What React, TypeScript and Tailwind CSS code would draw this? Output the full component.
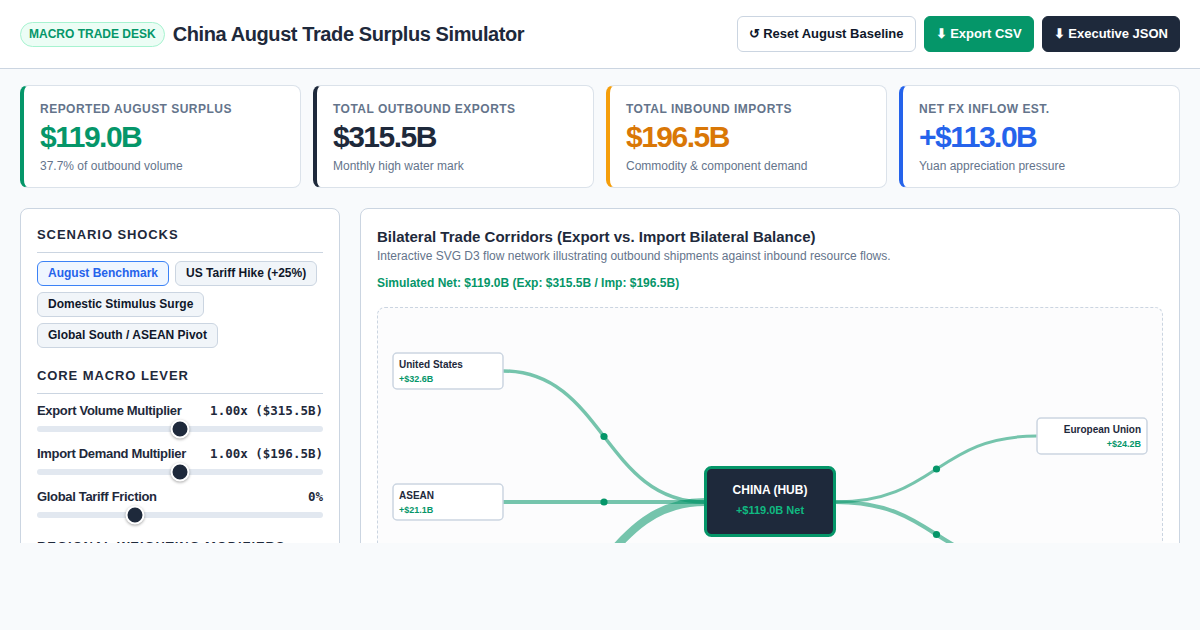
import React from "react"

const stats = [
    { label: "Reported August Surplus", value: "$119.0B", note: "37.7% of outbound volume", edge: "border-l-[#059669]", tone: "text-[#059669]" },
    { label: "Total Outbound Exports", value: "$315.5B", note: "Monthly high water mark", edge: "border-l-[#1e293b]", tone: "text-[#1e293b]" },
    { label: "Total Inbound Imports", value: "$196.5B", note: "Commodity & component demand", edge: "border-l-[#f59e0b]", tone: "text-[#d97706]" },
    { label: "Net FX Inflow Est.", value: "+$113.0B", note: "Yuan appreciation pressure", edge: "border-l-[#2563eb]", tone: "text-[#2563eb]" },
]

const scenarios = ["August Benchmark", "US Tariff Hike (+25%)", "Domestic Stimulus Surge", "Global South / ASEAN Pivot"]

const levers = [
    { name: "Export Volume Multiplier", readout: "1.00x ($315.5B)", pos: 50 },
    { name: "Import Demand Multiplier", readout: "1.00x ($196.5B)", pos: 50 },
    { name: "Global Tariff Friction", readout: "0%", pos: 34.3 },
]

// corridor curves, drawn like a d3 horizontal link
const link = (x0: number, y0: number, x1: number, y1: number) => {
    const mx = (x0 + x1) / 2
    return `M${x0},${y0} C${mx},${y0} ${mx},${y1} ${x1},${y1}`
}

const corridors = [
    { x0: 125, y0: 63, x1: 327, y1: 194, w: 3.5 },
    { x0: 125, y0: 194, x1: 327, y1: 194, w: 4 },
    { x0: 125, y0: 312, x1: 327, y1: 194, w: 8 },
    { x0: 458, y0: 194, x1: 659, y1: 128, w: 3 },
    { x0: 458, y0: 194, x1: 659, y1: 259, w: 4 },
]

function SectionTitle({ children }: { children: React.ReactNode }) {
    return (
        <h3 className="text-[13px] leading-[18px] font-bold uppercase tracking-[0.07em] text-[#1e293b] pb-2 border-b border-[#cbd5e1]">
            {children}
        </h3>
    )
}

function TradeGraph() {
    return (
        <svg width="100%" height="400" className="block">
            {corridors.map((c, i) => (
                <path key={i} d={link(c.x0, c.y0, c.x1, c.y1)} fill="none" stroke="#059669" strokeOpacity={0.55} strokeWidth={c.w} />
            ))}
            {corridors.map((c, i) => (
                <circle key={i} cx={(c.x0 + c.x1) / 2} cy={(c.y0 + c.y1) / 2} r={3.6} fill="#059669" />
            ))}

            {/* United States */}
            <rect x={15} y={45} width={110} height={36} rx={4} fill="#fff" stroke="#cbd5e1" strokeWidth={1.5} />
            <text x={21} y={60} fontSize={10} fontWeight={700} fill="#1e293b">United States</text>
            <text x={21} y={74} fontSize={9} fontWeight={700} fill="#059669">+$32.6B</text>

            {/* ASEAN */}
            <rect x={15} y={176} width={110} height={36} rx={4} fill="#fff" stroke="#cbd5e1" strokeWidth={1.5} />
            <text x={21} y={191} fontSize={10} fontWeight={700} fill="#1e293b">ASEAN</text>
            <text x={21} y={205} fontSize={9} fontWeight={700} fill="#059669">+$21.1B</text>

            {/* European Union */}
            <rect x={659} y={110} width={110} height={36} rx={4} fill="#fff" stroke="#cbd5e1" strokeWidth={1.5} />
            <text x={763} y={125} fontSize={10} fontWeight={700} fill="#1e293b" textAnchor="end">European Union</text>
            <text x={763} y={139} fontSize={9} fontWeight={700} fill="#059669" textAnchor="end">+$24.2B</text>

            {/* hub */}
            <rect x={327.5} y={159.5} width={129} height={68} rx={6} fill="#1e293b" stroke="#059669" strokeWidth={3} />
            <text x={392} y={186} fontSize={12} fontWeight={700} fill="#fff" textAnchor="middle">CHINA (HUB)</text>
            <text x={392} y={206} fontSize={11} fontWeight={700} fill="#10b981" textAnchor="middle">+$119.0B Net</text>
        </svg>
    )
}

export default function App() {
    return (
        <div className="min-h-screen bg-[#f8fafc] font-['Liberation_Sans',Arial,sans-serif] text-[#1e293b]">
            <div className="h-[543px] overflow-hidden">

                {/* Header */}
                <header className="bg-white border-b border-[#cbd5e1] px-5 py-4 flex items-center justify-between">
                    <div className="flex items-center gap-2">
                        <span className="rounded-full border border-[#a7f3d0] bg-[#ecfdf5] text-[#059669] text-xs font-bold leading-[17px] px-2 py-[3px]">MACRO TRADE DESK</span>
                        <h1 className="text-xl font-bold tracking-[-0.02em] text-[#1e293b]">China August Trade Surplus Simulator</h1>
                    </div>
                    <div className="flex items-center gap-2">
                        <button className="border border-[#cbd5e1] bg-white text-[#0f172a] text-[13px] font-bold leading-5 px-[11px] py-[7px] rounded-md">↺ Reset August Baseline</button>
                        <button className="border border-[#059669] bg-[#059669] text-white text-[13px] font-bold leading-5 px-[11px] py-[7px] rounded-md">⬇ Export CSV</button>
                        <button className="border border-[#1e293b] bg-[#1e293b] text-white text-[13px] font-bold leading-5 px-[11px] py-[7px] rounded-md">⬇ Executive JSON</button>
                    </div>
                </header>

                <main className="px-5 pt-4">

                    {/* KPI cards */}
                    <div className="grid grid-cols-4 gap-3">
                        {stats.map((s) => (
                            <div key={s.label} className={`bg-white border border-[#dbe2ea] border-l-4 ${s.edge} rounded-lg px-4 pt-[15px] pb-[13px]`}>
                                <div className="text-xs leading-4 font-bold uppercase tracking-[0.04em] text-[#64748b]">{s.label}</div>
                                <div className={`mt-0.5 text-3xl leading-9 font-bold tracking-tighter ${s.tone}`}>{s.value}</div>
                                <div className="mt-[3px] text-xs leading-4 text-[#64748b]">{s.note}</div>
                            </div>
                        ))}
                    </div>

                    <div className="mt-5 flex gap-5 items-start">

                        {/* Controls */}
                        <aside className="w-80 shrink-0 bg-white border border-[#cbd5e1] rounded-lg px-4 pt-[17px] pb-4">
                            <SectionTitle>Scenario Shocks</SectionTitle>
                            <div className="mt-2 flex flex-wrap gap-1.5">
                                {scenarios.map((name, i) => (
                                    <button
                                        key={name}
                                        className={
                                            i === 0
                                                ? "border border-[#3b82f6] bg-[#eff6ff] text-[#2563eb] text-xs font-bold leading-[17px] px-2.5 py-[3px] rounded-md"
                                                : "border border-[#cbd5e1] bg-[#f1f5f9] text-[#0f172a] text-xs font-bold leading-[17px] px-2.5 py-[3px] rounded-md"
                                        }
                                    >
                                        {name}
                                    </button>
                                ))}
                            </div>

                            <div className="mt-[19px]">
                                <SectionTitle>Core Macro Lever</SectionTitle>
                            </div>
                            <div className="mt-2 flex flex-col gap-[13px]">
                                {levers.map((l) => (
                                    <div key={l.name}>
                                        <div className="flex items-center justify-between h-[18px]">
                                            <span className="text-[13px] leading-[18px] font-bold tracking-tight text-[#1e293b]">{l.name}</span>
                                            <span className="font-['DejaVu_Sans_Mono','Liberation_Mono',monospace] text-[12.5px] leading-[18px] font-bold text-[#1e293b]">{l.readout}</span>
                                        </div>
                                        <div className="relative mt-1.5 h-1.5 rounded-full bg-[#e2e8f0]">
                                            <div
                                                className="absolute top-1/2 w-[19px] h-[19px] -translate-x-1/2 -translate-y-1/2 rounded-full bg-[#1e293b] border-2 border-white shadow-[0_1px_3px_rgba(0,0,0,0.35)]"
                                                style={{ left: `${l.pos}%` }}
                                            />
                                        </div>
                                    </div>
                                ))}
                            </div>

                            <div className="mt-5">
                                <SectionTitle>Regional Weighting Modifiers</SectionTitle>
                            </div>
                        </aside>

                        {/* Corridor network */}
                        <section className="flex-1 bg-white border border-[#cbd5e1] rounded-lg px-4 pt-[18px] pb-4">
                            <h2 className="text-[15px] leading-5 font-bold text-[#1e293b]">Bilateral Trade Corridors (Export vs. Import Bilateral Balance)</h2>
                            <p className="mt-px text-xs leading-4 text-[#64748b]">Interactive SVG D3 flow network illustrating outbound shipments against inbound resource flows.</p>
                            <p className="mt-[11px] text-xs leading-4 font-bold text-[#059669]">Simulated Net: $119.0B (Exp: $315.5B / Imp: $196.5B)</p>
                            <div className="mt-4 border border-dashed border-[#cbd5e1] rounded-lg bg-[#fcfcfd]">
                                <TradeGraph />
                            </div>
                        </section>
                    </div>
                </main>
            </div>
        </div>
    )
}
